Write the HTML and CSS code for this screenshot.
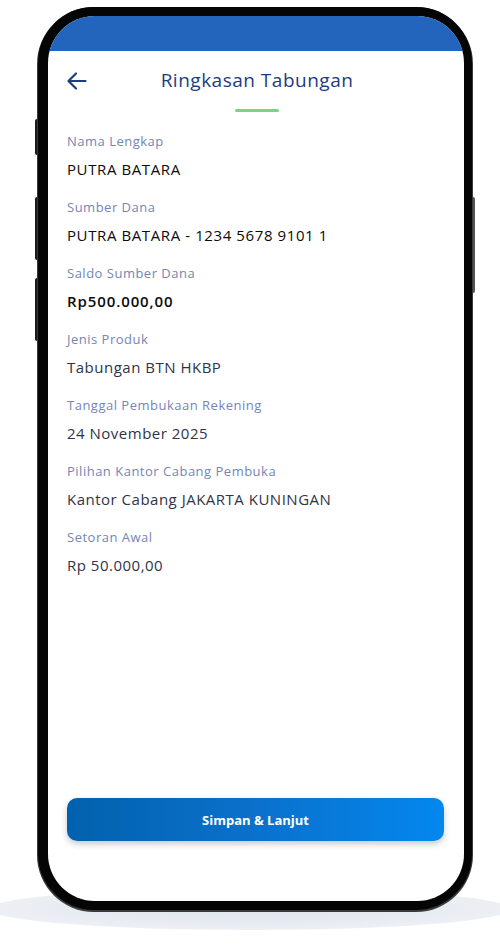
FILE: index.html
```html
<!DOCTYPE html>
<html lang="id">
<head>
<meta charset="utf-8">
<title>Ringkasan Tabungan</title>
<link rel="stylesheet" href="styles.css">
</head>
<body>
<div class="stage">
  <div class="floor-shadow"></div>
  <div class="side-btn side-btn--l1"></div>
  <div class="side-btn side-btn--l2"></div>
  <div class="side-btn side-btn--l3"></div>
  <div class="side-btn side-btn--r1"></div>
  <div class="phone">
    <div class="screen">
      <div class="statusbar"></div>
      <div class="topbar">
        <button class="back" aria-label="Kembali">
          <svg width="20" height="18" viewBox="0 0 20 18" fill="none" stroke="#1c3f7e" stroke-width="2.2" stroke-linecap="round" stroke-linejoin="round">
            <path d="M18.5 9H2M9 1.5L1.5 9L9 16.5"/>
          </svg>
        </button>
        <h1 class="title">Ringkasan Tabungan</h1>
      </div>
      <div class="indicator"></div>
      <dl class="details">
        <div class="item">
          <dt class="label">Nama Lengkap</dt>
          <dd class="value value--dark">PUTRA BATARA</dd>
        </div>
        <div class="item">
          <dt class="label">Sumber Dana</dt>
          <dd class="value value--dark">PUTRA BATARA - 1234 5678 9101 1</dd>
        </div>
        <div class="item">
          <dt class="label">Saldo Sumber Dana</dt>
          <dd class="value value--dark value--bold">Rp500.000,00</dd>
        </div>
        <div class="item">
          <dt class="label">Jenis Produk</dt>
          <dd class="value">Tabungan BTN HKBP</dd>
        </div>
        <div class="item">
          <dt class="label">Tanggal Pembukaan Rekening</dt>
          <dd class="value">24 November 2025</dd>
        </div>
        <div class="item">
          <dt class="label">Pilihan Kantor Cabang Pembuka</dt>
          <dd class="value">Kantor Cabang JAKARTA KUNINGAN</dd>
        </div>
        <div class="item">
          <dt class="label">Setoran Awal</dt>
          <dd class="value">Rp 50.000,00</dd>
        </div>
      </dl>
      <div class="footer">
        <button class="primary">Simpan &amp; Lanjut</button>
      </div>
    </div>
  </div>
</div>
</body>
</html>
```
FILE: styles.css
```css
* { box-sizing: border-box; }
html, body {
  margin: 0;
  padding: 0;
  background: #ffffff;
  font-family: "Open Sans", "Noto Sans", sans-serif;
}
.stage {
  position: relative;
  width: 500px;
  height: 947px;
  padding: 7px 0 0 38px;
}
.floor-shadow {
  position: absolute;
  left: -10px;
  top: 888px;
  width: 520px;
  height: 42px;
  border-radius: 50%;
  background: radial-gradient(ellipse at center, #dfe4ec 0%, #e9ecf2 55%, #f5f6f9 100%);
}
.side-btn {
  position: absolute;
  background: #1a1a1a;
  width: 4px;
  border-radius: 2px;
}
.side-btn--l1 { left: 35px; top: 119px; height: 36px; }
.side-btn--l2 { left: 35px; top: 197px; height: 63px; }
.side-btn--l3 { left: 35px; top: 278px; height: 63px; }
.side-btn--r1 { left: 471px; top: 197px; height: 96px; background: #555; }
.phone {
  position: relative;
  width: 434px;
  height: 903px;
  border: 9px solid #050505;
  border-radius: 56px;
  background: #050505;
  box-shadow: 0 1px 0 1px #3a3a3a;
}
.screen {
  width: 100%;
  height: 100%;
  background: #ffffff;
  border-radius: 47px;
  overflow: hidden;
  display: flex;
  flex-direction: column;
  margin-left: 1px;
}
.statusbar {
  height: 35px;
  flex: none;
  background: #2364bc;
}
.topbar {
  position: relative;
  height: 58px;
  display: flex;
  align-items: center;
  justify-content: center;
}
.back {
  position: absolute;
  left: 19px;
  top: 21px;
  padding: 0;
  border: 0;
  background: none;
  display: flex;
}
.title {
  margin: 0;
  font-size: 19px;
  font-weight: 500;
  color: #1b3d7f;
  letter-spacing: 0.5px;
  padding-left: 2px;
}
.indicator {
  align-self: center;
  width: 44px;
  height: 3px;
  border-radius: 2px;
  background: #78d585;
  margin-left: 1px;
}
.details {
  margin: 20px 0 0;
  padding: 0 20px 0 19px;
  display: flex;
  flex-direction: column;
  gap: 17px;
}
.item {
  display: flex;
  flex-direction: column;
  gap: 8px;
}
.label {
  font-size: 13px;
  line-height: 18px;
  color: #7585b5;
  font-weight: 400;
  letter-spacing: 0.5px;
}
.value {
  margin: 0;
  font-size: 15px;
  line-height: 23px;
  font-weight: 500;
  color: #2f3447;
  letter-spacing: 0.5px;
}
.value--dark {
  color: #0b0b0b;
  letter-spacing: 0.6px;
}
.value--bold {
  font-weight: 600;
  letter-spacing: 0.9px;
}
.footer {
  margin-top: auto;
  padding: 0 20px 60px 19px;
}
.primary {
  width: 100%;
  height: 43px;
  border: 0;
  border-radius: 10px;
  background: linear-gradient(90deg, #0261ad 0%, #0a71cc 50%, #0387ee 100%);
  color: #ffffff;
  font-family: "Open Sans", "Noto Sans", sans-serif;
  font-size: 13px;
  font-weight: 700;
  box-shadow: 0 3px 6px rgba(20, 40, 80, 0.25);
}
```
